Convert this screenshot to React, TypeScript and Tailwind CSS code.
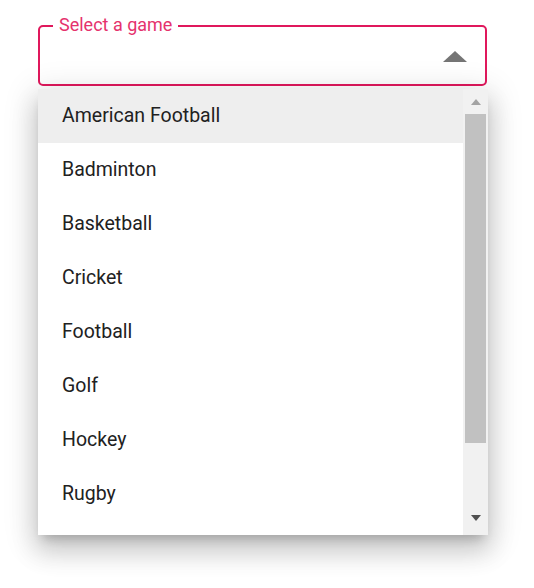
import React from "react";

const items = [
  "American Football",
  "Badminton",
  "Basketball",
  "Cricket",
  "Football",
  "Golf",
  "Hockey",
  "Rugby",
];

export default function App() {
  return (
    <div className="w-[534px] h-[588px] bg-white relative" style={{ fontFamily: "Roboto, 'Liberation Sans', sans-serif" }}>
      <div className="absolute left-[38px] top-[25px] w-[449px] h-[61px] rounded-[5px] border-2 border-[#e0185c]">
        <span className="absolute left-[13px] top-[-13px] bg-white px-[6px] text-[18px] leading-[22px] text-[#e5326d]">
          Select a game
        </span>
        <svg className="absolute left-[403px] top-[24px]" width="24" height="11" viewBox="0 0 24 11">
          <polygon points="12,0 24,11 0,11" fill="#757575" />
        </svg>
      </div>
      <div className="absolute left-[38px] top-[89px] w-[450px] h-[446px] bg-white flex overflow-hidden shadow-[0_8px_10px_-5px_rgba(0,0,0,0.2),0_16px_24px_2px_rgba(0,0,0,0.14),0_6px_30px_5px_rgba(0,0,0,0.12)]">
        <div className="flex-1 flex flex-col">
          {items.map((it, i) => (
            <div
              key={it}
              className={`h-[54px] shrink-0 flex items-center pl-[24px] text-[19.5px] text-[#212121] ${i === 0 ? "bg-[#eeeeee]" : ""}`}
            >
              {it}
            </div>
          ))}
        </div>
        <div className="w-[25px] h-full bg-[#f1f1f1] flex flex-col items-center">
          <div className="h-[25px] w-full flex items-center justify-center">
            <svg width="10" height="6" viewBox="0 0 10 6">
              <polygon points="5,0 10,6 0,6" fill="#a3a3a3" />
            </svg>
          </div>
          <div className="w-[21px] h-[329px] bg-[#c1c1c1]" />
          <div className="flex-1" />
          <div className="h-[24px] w-full flex items-start justify-center pt-[4px]">
            <svg width="10" height="6" viewBox="0 0 10 6">
              <polygon points="0,0 10,0 5,6" fill="#505050" />
            </svg>
          </div>
        </div>
      </div>
    </div>
  );
}
